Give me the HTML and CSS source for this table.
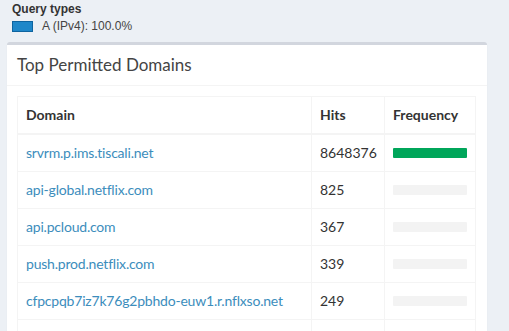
FILE: index.html
```html
<!DOCTYPE html>
<html lang="en">
<head>
  <meta charset="UTF-8">
  <meta name="viewport" content="width=device-width, initial-scale=1.0">
  <title>Pi-hole Dashboard</title>
  <link rel="stylesheet" href="styles.css">
</head>
<body>
  <div class="page">
    <div class="legend-block">
      <div class="legend-title">Query types</div>
      <div class="legend-item">
        <span class="legend-swatch"></span>
        <span>A (IPv4): 100.0%</span>
      </div>
    </div>

    <div class="box">
      <div class="box-header">
        <h3 class="box-title">Top Permitted Domains</h3>
      </div>
      <div class="box-body">
        <table class="domain-table">
          <colgroup>
            <col>
            <col class="col-hits">
            <col class="col-freq">
          </colgroup>
          <thead>
            <tr>
              <th>Domain</th>
              <th>Hits</th>
              <th>Frequency</th>
            </tr>
          </thead>
          <tbody>
            <tr>
              <td><a href="#">srvrm.p.ims.tiscali.net</a></td>
              <td>8648376</td>
              <td><div class="progress"><div class="progress-bar" style="width: 100%"></div></div></td>
            </tr>
            <tr>
              <td><a href="#">api-global.netflix.com</a></td>
              <td>825</td>
              <td><div class="progress"><div class="progress-bar" style="width: 0.01%"></div></div></td>
            </tr>
            <tr>
              <td><a href="#">api.pcloud.com</a></td>
              <td>367</td>
              <td><div class="progress"><div class="progress-bar" style="width: 0%"></div></div></td>
            </tr>
            <tr>
              <td><a href="#">push.prod.netflix.com</a></td>
              <td>339</td>
              <td><div class="progress"><div class="progress-bar" style="width: 0%"></div></div></td>
            </tr>
            <tr>
              <td><a href="#">cfpcpqb7iz7k76g2pbhdo-euw1.r.nflxso.net</a></td>
              <td>249</td>
              <td><div class="progress"><div class="progress-bar" style="width: 0%"></div></div></td>
            </tr>
            <tr>
              <td>&nbsp;</td>
              <td>&nbsp;</td>
              <td>&nbsp;</td>
            </tr>
          </tbody>
        </table>
      </div>
    </div>
  </div>
</body>
</html>
```

FILE: styles.css
```css
body {
  margin: 0;
  background: #ecf0f5;
  font-family: 'Lato', sans-serif;
  font-size: 14px;
  color: #333;
}

.page {
  padding: 2px 22px 0 7px;
}

/* chart legend */
.legend-block {
  padding-left: 5px;
  font-family: 'Liberation Sans', Arial, sans-serif;
  font-size: 12px;
  line-height: 14px;
  color: #444;
}

.legend-title {
  font-weight: bold;
  color: #333;
}

.legend-item {
  display: flex;
  align-items: center;
  gap: 9px;
  margin-top: 3px;
  color: #444;
}

.legend-swatch {
  width: 19px;
  height: 9px;
  background: #1f87c9;
  border: 1px solid #0e64a0;
}

/* box */
.box {
  margin-top: 9px;
  background: #fff;
  border-top: 3px solid #d2d6de;
  border-radius: 3px;
  box-shadow: 0 1px 1px rgba(0, 0, 0, 0.1);
}

.box-header {
  padding: 10px;
  border-bottom: 1px solid #f4f4f4;
}

.box-title {
  margin: 0;
  font-size: 17px;
  line-height: 20px;
  font-weight: normal;
  color: #444;
}

.box-body {
  padding: 10px 11px 10px 10px;
}

.domain-table {
  width: 100%;
  border-collapse: collapse;
  table-layout: fixed;
  border: 1px solid #f4f4f4;
}

.col-hits { width: 73px; }
.col-freq { width: 91px; }

th, td {
  padding: 8px;
  line-height: 20px;
  text-align: left;
  border: 1px solid #f4f4f4;
  white-space: nowrap;
}

thead th {
  border-bottom-width: 2px;
  font-weight: bold;
}

a {
  color: #3c8dbc;
  text-decoration: none;
  letter-spacing: -0.2px;
}

.progress {
  height: 10px;
  margin: 5px 0;
  background: #f3f3f3;
  border-radius: 1px;
  overflow: hidden;
}

.progress-bar {
  height: 100%;
  background: #00a65a;
}
```
